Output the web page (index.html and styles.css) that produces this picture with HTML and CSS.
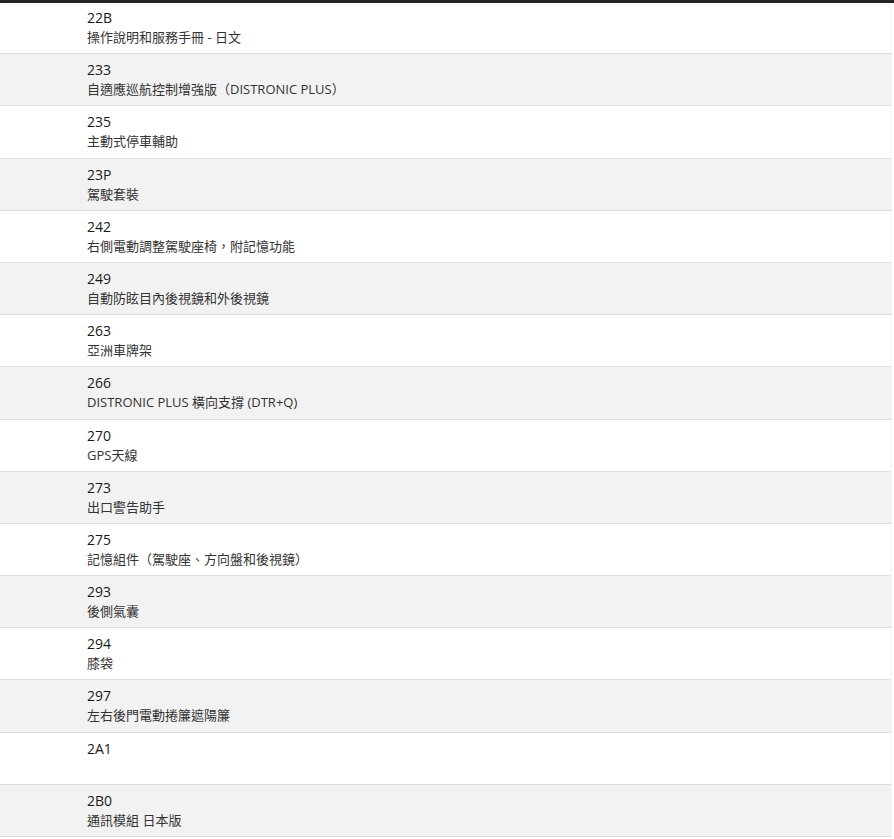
FILE: index.html
```html
<!DOCTYPE html>
<html lang="zh-Hant">
<head>
<meta charset="utf-8">
<title>選配代碼</title>
<link rel="stylesheet" href="styles.css">
</head>
<body>
<div class="topbar"></div>
<ul class="codes">
  <li class="row"><span class="code">22B</span><span class="desc">操作說明和服務手冊 - 日文</span></li>
  <li class="row alt"><span class="code">233</span><span class="desc">自適應巡航控制增強版（DISTRONIC PLUS）</span></li>
  <li class="row"><span class="code">235</span><span class="desc">主動式停車輔助</span></li>
  <li class="row alt"><span class="code">23P</span><span class="desc">駕駛套裝</span></li>
  <li class="row"><span class="code">242</span><span class="desc">右側電動調整駕駛座椅，附記憶功能</span></li>
  <li class="row alt"><span class="code">249</span><span class="desc">自動防眩目內後視鏡和外後視鏡</span></li>
  <li class="row"><span class="code">263</span><span class="desc">亞洲車牌架</span></li>
  <li class="row alt"><span class="code">266</span><span class="desc">DISTRONIC PLUS 橫向支撐 (DTR+Q)</span></li>
  <li class="row"><span class="code">270</span><span class="desc">GPS天線</span></li>
  <li class="row alt"><span class="code">273</span><span class="desc">出口警告助手</span></li>
  <li class="row"><span class="code">275</span><span class="desc">記憶組件（駕駛座、方向盤和後視鏡）</span></li>
  <li class="row alt"><span class="code">293</span><span class="desc">後側氣囊</span></li>
  <li class="row"><span class="code">294</span><span class="desc">膝袋</span></li>
  <li class="row alt"><span class="code">297</span><span class="desc">左右後門電動捲簾遮陽簾</span></li>
  <li class="row"><span class="code">2A1</span><span class="desc"></span></li>
  <li class="row alt"><span class="code">2B0</span><span class="desc">通訊模組 日本版</span></li>
</ul>
</body>
</html>
```
FILE: styles.css
```css
html, body {
  margin: 0;
  padding: 0;
  background: #ffffff;
}
body {
  font-family: "Open Sans", "Noto Sans CJK TC", sans-serif;
  color: #222222;
  width: 894px;
  overflow: hidden;
}
.topbar {
  height: 3px;
  background: #222428;
  box-shadow: 0 1px 6px rgba(0,0,0,0.08);
  position: relative;
}
.codes {
  list-style: none;
  margin: -1px 0 0;
  padding: 0;
  width: 891px;
  border-right: 1px solid #f4f4f4;
}
.row {
  display: flex;
  flex-direction: column;
  height: 51.2px;
  box-sizing: content-box;
  padding: 0 0 0 87px;
  border-bottom: 1px solid #dedede;
  background: #ffffff;
}
.row.alt {
  background: #f2f2f2;
}
.code {
  font-size: 14px;
  line-height: 20px;
  margin-top: 6px;
  font-weight: 500;
  color: #1a1a1a;
}
.desc {
  font-size: 13px;
  line-height: 18px;
  color: #333333;
  font-family: "Open Sans", "Noto Sans CJK TC", sans-serif;
}
```
